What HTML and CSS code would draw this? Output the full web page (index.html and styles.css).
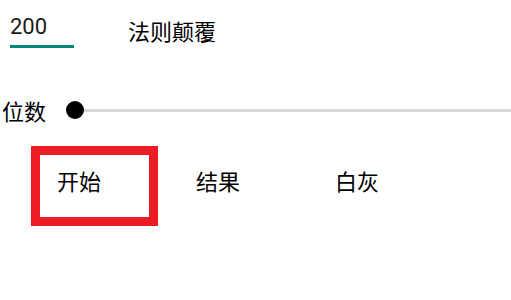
FILE: index.html
```html
<!DOCTYPE html>
<html lang="zh">
<head>
<meta charset="utf-8">
<title>法则颠覆</title>
<link rel="stylesheet" href="styles.css">
</head>
<body>
<div class="page">
  <div class="row top">
    <div class="edit">200</div>
    <div class="title">法则颠覆</div>
  </div>
  <div class="row slider-row">
    <span class="label">位数</span>
    <div class="slider">
      <div class="track"></div>
      <div class="thumb"></div>
    </div>
  </div>
  <div class="row buttons">
    <div class="btn selected">开始</div>
    <div class="btn">结果</div>
    <div class="btn">白灰</div>
  </div>
</div>
</body>
</html>
```
FILE: styles.css
```css
html, body {
  margin: 0;
  padding: 0;
  background: #ffffff;
}
.page {
  width: 511px;
  height: 300px;
  overflow: hidden;
  color: #000000;
  font-family: "Noto Sans CJK SC", "Noto Sans", sans-serif;
  font-size: 22px;
}
.row {
  display: flex;
}
.top {
  align-items: flex-start;
  padding-left: 10px;
}
.edit {
  font-family: Roboto, "Noto Sans", sans-serif;
  width: 64px;
  margin-top: 14px;
  line-height: 26px;
  padding-bottom: 5px;
  border-bottom: 3px solid #008577;
  color: #1a1a1a;
}
.title {
  margin-left: 54px;
  margin-top: 17px;
  line-height: 26px;
}
.slider-row {
  margin-top: 47px;
  height: 30px;
  align-items: center;
  padding-left: 2px;
}
.label {
  line-height: 26px;
}
.slider {
  flex: 1;
  margin-left: 20px;
  height: 18px;
  position: relative;
  display: flex;
  align-items: center;
}
.track {
  flex: 1;
  margin-left: 9px;
  height: 3px;
  background: #d7d7d7;
}
.thumb {
  position: absolute;
  left: 0;
  top: 0;
  width: 18px;
  height: 18px;
  border-radius: 50%;
  background: #000000;
}
.buttons {
  margin-top: 21px;
  padding-left: 31px;
  gap: 12px;
}
.btn {
  box-sizing: border-box;
  width: 127px;
  height: 80px;
  border: 9px solid transparent;
  padding-left: 17px;
  padding-top: 12px;
  line-height: 26px;
}
.btn.selected {
  border-color: #ed1c24;
}
```
